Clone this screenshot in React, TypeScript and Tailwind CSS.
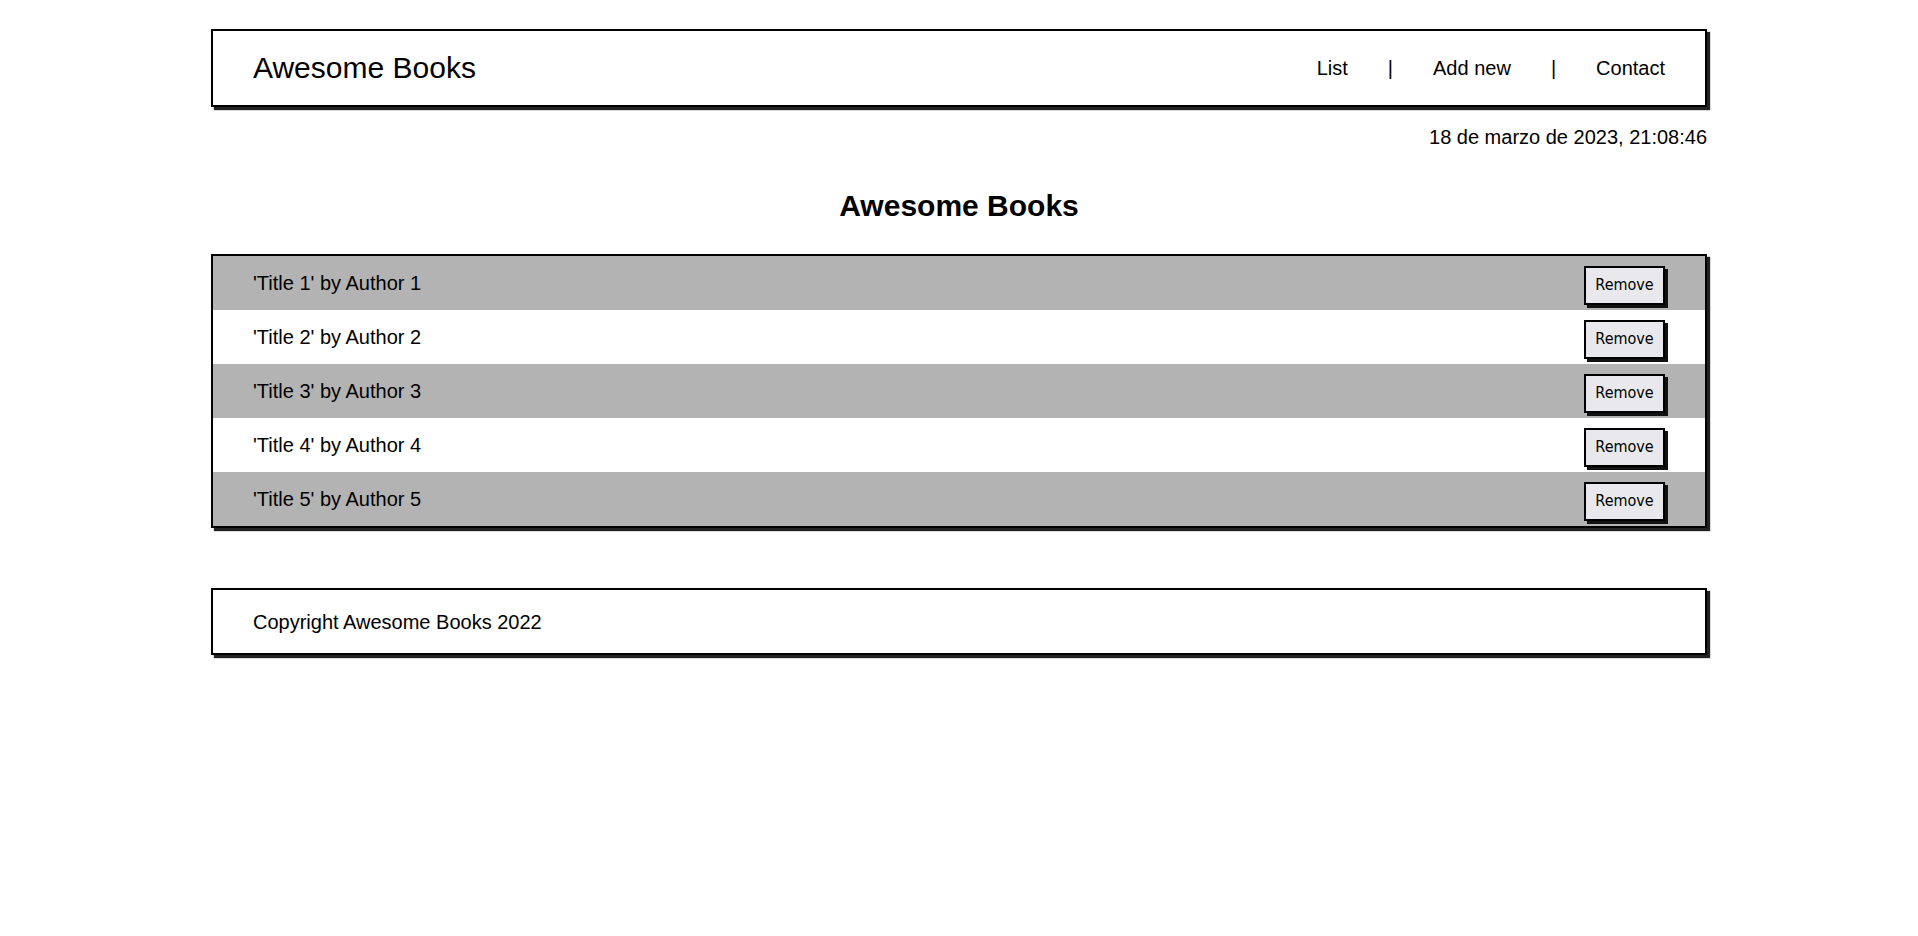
const BOOKS = [1, 2, 3, 4, 5].map((n) => ({
  id: n,
  title: `Title ${n}`,
  author: `Author ${n}`,
}));

const SANS = "font-['Liberation_Sans',Arial,sans-serif]";

export default function App() {
  return (
    <div className={`${SANS} min-h-screen bg-white text-black`}>
      <div className="mx-auto w-[78%] pt-[29px]">
        {/* Top bar */}
        <header className="flex h-[78px] items-center justify-between border-2 border-black px-[40px] shadow-[3px_3px_1px_#222]">
          <h1 className="text-[30px] leading-[36px]">Awesome Books</h1>
          <nav className="flex items-center gap-[40px] text-[20px] leading-[24px]">
            <span>List</span>
            <span>|</span>
            <span>Add new</span>
            <span>|</span>
            <span>Contact</span>
          </nav>
        </header>

        <p className="mt-[18px] text-right text-[20px] leading-[24px]">18 de marzo de 2023, 21:08:46</p>

        <h2 className="mt-[39px] text-center text-[30px] font-bold leading-[36px]">Awesome Books</h2>

        {/* Book list */}
        <ul className="mt-[30px] border-2 border-black shadow-[3px_3px_1px_#222]">
          {BOOKS.map((book, i) => (
            <li
              key={book.id}
              className={`flex h-[54px] items-center justify-between px-[40px] ${i % 2 === 0 ? "bg-[#b3b3b3]" : "bg-white"}`}
            >
              <span className="text-[20px] leading-[24px]">
                '{book.title}' by {book.author}
              </span>
              <button
                type="button"
                className="mt-[4px] flex h-[39px] w-[81px] items-center justify-center border-2 border-black bg-[#e9e9ed] font-['DejaVu_Sans_Condensed','DejaVu_Sans',sans-serif] text-[16px] [font-stretch:condensed] shadow-[3px_3px_0_#111]"
              >
                Remove
              </button>
            </li>
          ))}
        </ul>

        <footer className="mt-[60px] flex h-[67px] items-center border-2 border-black px-[40px] shadow-[3px_3px_1px_#222]">
          <p className="text-[20px] leading-[24px]">Copyright Awesome Books 2022</p>
        </footer>
      </div>
    </div>
  );
}
